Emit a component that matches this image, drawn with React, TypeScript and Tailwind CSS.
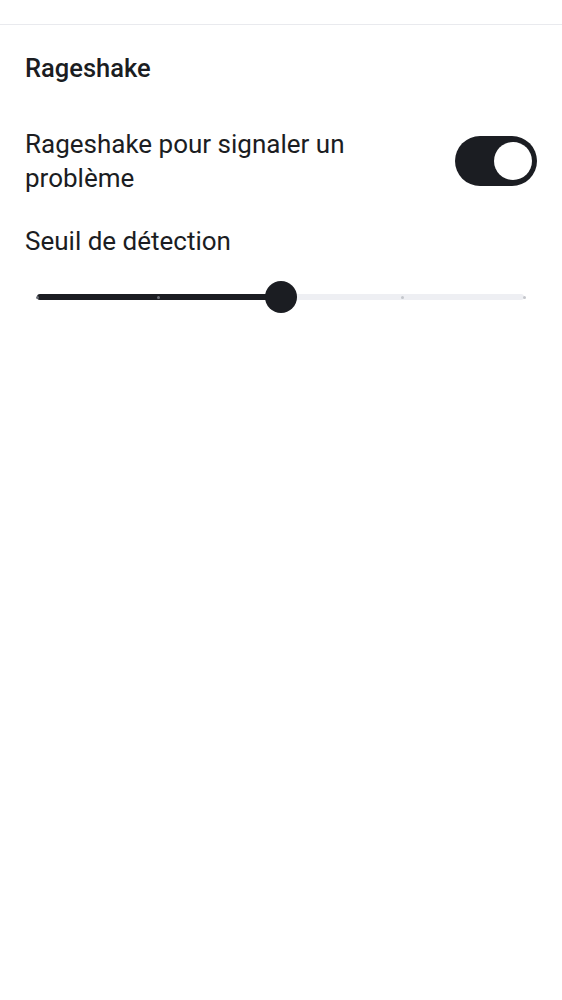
import React from "react";

export default function App() {
  const ticks = [0, 1, 2, 3, 4];
  const value = 2;
  return (
    <div className="w-[562px] h-[1000px] bg-white text-[#1b1d22]" style={{ fontFamily: "Roboto, 'Noto Sans', sans-serif" }}>
      <div className="h-[25px] border-b border-[#e9eaee]" />
      <div className="px-[25px]">
        <div className="pt-[28px] h-[80px] text-[25.5px] font-medium leading-[30px]">Rageshake</div>
        <div className="flex items-center justify-between pt-[22px]">
          <div className="w-[360px] text-[26px] leading-[34px]">Rageshake pour signaler un problème</div>
          <div className="w-[82px] h-[50px] rounded-full bg-[#1b1d22] flex items-center justify-end pr-[5px]">
            <div className="w-[38px] h-[38px] rounded-full bg-white" />
          </div>
        </div>
        <div className="mt-[29px] text-[26px] leading-[34px]">Seuil de détection</div>
        <div className="relative mt-[23px] h-[32px] ml-[12px] mr-[13px] flex items-center">
          <div className="relative w-full h-[6px] rounded-full bg-[#eeeff3]">
            <div className="absolute left-0 top-0 h-[6px] rounded-full bg-[#1b1d22]" style={{ width: `${(value / 4) * 100}%` }} />
            {ticks.map((t) => (
              <div
                key={t}
                className={`absolute top-[2px] w-[3px] h-[3px] rounded-full ${t <= value ? "bg-[#6b6e75]" : "bg-[#c4c6cc]"}`}
                style={{ left: `calc(${(t / 4) * 100}% - 1.5px)` }}
              />
            ))}
          </div>
          <div className="absolute top-0 w-[32px] h-[32px] rounded-full bg-[#1b1d22]" style={{ left: `calc(${(value / 4) * 100}% - 16px)` }} />
        </div>
      </div>
    </div>
  );
}
